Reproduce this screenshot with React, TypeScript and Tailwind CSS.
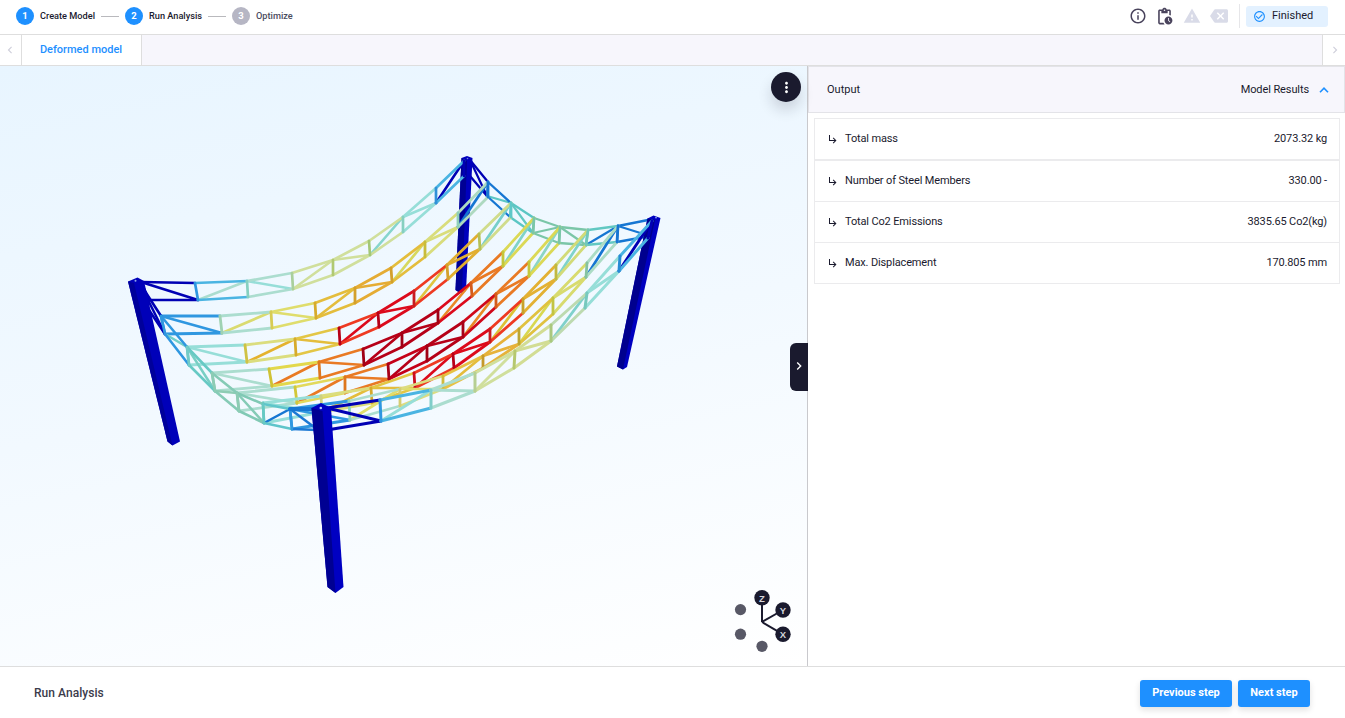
import type { ReactNode } from "react";
import {
  MdInfoOutline,
  MdOutlinePendingActions,
  MdWarning,
  MdBackspace,
  MdCheckCircleOutline,
  MdChevronLeft,
  MdChevronRight,
  MdMoreVert,
  MdSubdirectoryArrowRight,
} from "react-icons/md";

type Pt = [number, number];

interface Truss {
  top: Pt[];
  bottom: Pt[];
  chords: string[];
  diagonals: string[];
  posts: string[];
}

const NAVY = "#0000b4";
const BLUE = "#1676d2";
const SKY = "#2f97e0";
const CYAN = "#4ab4e2";
const AQUA = "#96ded8";
const MINT = "#abddcf";
const PALE = "#d0df9c";
const YELLOW = "#dfdd6c";
const GOLD = "#e4bd3c";
const ORANGE = "#e97a24";
const RED = "#ee3a22";
const CRIMSON = "#dc0a1c";
const DARK = "#b60018";

const trusses: Truss[] = [
  {
    top: [[141, 282], [195, 283], [247, 281], [292, 273], [333, 260], [369, 241], [403, 217], [436, 188], [464, 161]],
    bottom: [[149, 300], [198, 300], [248, 297], [293, 289], [333, 275], [370, 255], [403, 232], [436, 203], [464, 176]],
    chords: [NAVY, CYAN, MINT, PALE, PALE, PALE, AQUA, CYAN],
    diagonals: [NAVY, MINT, AQUA, PALE, PALE, "#86d5cd", AQUA, NAVY],
    posts: [NAVY, SKY, "#86d0c0", "#a9cf9c", "#b0c972", "#a3c777", "#86cfc0", "#3091d8", NAVY],
  },
  {
    top: [[161, 316], [220, 316], [271, 312], [315, 303], [355, 288], [391, 268], [425, 242], [458, 213], [488, 182]],
    bottom: [[165, 334], [222, 333], [272, 328], [316, 318], [355, 303], [392, 282], [425, 257], [458, 227], [488, 197]],
    chords: [SKY, MINT, YELLOW, GOLD, "#e5ac34", GOLD, "#d9dd7c", "#add9c0"],
    diagonals: [SKY, "#dadb70", YELLOW, GOLD, "#e5ac34", "#d7d85e", "#d9dd7c", BLUE],
    posts: [SKY, "#9fd2b2", "#d7cc54", "#d6ab2c", "#d3a02c", "#d3a02c", "#c9bc3c", "#8fcfb8", BLUE],
  },
  {
    top: [[187, 347], [245, 345], [295, 339], [339, 328], [378, 313], [414, 291], [447, 265], [479, 234], [511, 203]],
    bottom: [[189, 365], [247, 362], [296, 355], [340, 344], [379, 327], [414, 306], [448, 279], [480, 249], [511, 217]],
    chords: [AQUA, "#dbdd7e", "#e3c645", RED, CRIMSON, RED, "#e1ae30", "#d0dc8c"],
    diagonals: [AQUA, "#e4b22e", GOLD, CRIMSON, CRIMSON, "#dfc540", "#e1ae30", "#76cfca"],
    posts: ["#72cbc7", "#cfc245", "#d6ab2c", DARK, DARK, "#c81b20", "#d3a02c", "#b5bf55", "#5fc8c8"],
  },
  {
    top: [[212, 373], [269, 369], [319, 362], [363, 349], [402, 333], [438, 310], [471, 283], [503, 252], [534, 218]],
    bottom: [[215, 391], [272, 386], [320, 378], [364, 365], [402, 347], [438, 323], [472, 296], [503, 266], [533, 233]],
    chords: [MINT, "#e2d84c", ORANGE, DARK, DARK, CRIMSON, ORANGE, "#dbd956"],
    diagonals: [MINT, ORANGE, ORANGE, DARK, DARK, "#e98926", ORANGE, "#80d3c7"],
    posts: ["#8dccb4", "#cfc235", "#dd771e", "#a00016", "#a00016", "#a00016", "#d45b1c", "#c3c73a", "#7bc6a8"],
  },
  {
    top: [[237, 393], [295, 387], [345, 377], [388, 364], [427, 346], [463, 322], [496, 294], [529, 262], [560, 227]],
    bottom: [[239, 411], [297, 403], [345, 393], [389, 379], [427, 361], [463, 337], [496, 307], [529, 276], [559, 243]],
    chords: [MINT, "#e2d95c", ORANGE, "#c50018", DARK, "#d0081a", ORANGE, "#dbd956"],
    diagonals: [MINT, ORANGE, ORANGE, DARK, DARK, "#e98926", ORANGE, "#8bd5c4"],
    posts: ["#8dccb4", "#d1c739", "#dd771e", "#a60018", "#a00016", "#a60018", "#d45b1c", "#c3c73a", "#7bc6a8"],
  },
  {
    top: [[263, 403], [321, 396], [371, 388], [414, 373], [453, 354], [490, 329], [523, 299], [556, 265], [588, 230]],
    bottom: [[264, 423], [322, 412], [372, 403], [415, 388], [454, 368], [490, 342], [523, 313], [556, 279], [586, 245]],
    chords: [AQUA, "#dbdd7e", "#e3c645", RED, CRIMSON, RED, "#e3b133", "#d2db78"],
    diagonals: [AQUA, GOLD, GOLD, CRIMSON, CRIMSON, "#dcc235", "#e3b133", "#7fd3ca"],
    posts: ["#67c9c4", "#cdd083", "#d6ab2c", "#cc0c1c", DARK, "#c81b20", "#c8a22c", "#c0b941", "#72c8b9"],
  },
  {
    top: [[290, 409], [349, 401], [400, 389], [443, 376], [483, 356], [519, 329], [553, 298], [587, 263], [618, 226]],
    bottom: [[292, 429], [350, 420], [400, 406], [443, 389], [483, 368], [519, 344], [553, 314], [586, 277], [617, 242]],
    chords: [SKY, MINT, "#dcdc80", "#e7c144", "#e6b23a", "#e0c240", "#d8db6e", "#acdcc5"],
    diagonals: [SKY, YELLOW, YELLOW, GOLD, "#e6b23a", "#d8d850", "#d8db6e", BLUE],
    posts: [SKY, "#8bd1bf", "#d5cc70", "#d1ba3b", "#c4992b", "#bda631", "#c2c443", "#86c3a0", BLUE],
  },
  {
    top: [[327, 408], [380, 400], [431, 390], [475, 373], [515, 351], [551, 325], [587, 293], [620, 256], [652, 221]],
    bottom: [[327, 430], [381, 421], [431, 408], [475, 391], [514, 368], [551, 341], [585, 308], [619, 271], [648, 238]],
    chords: [NAVY, CYAN, MINT, PALE, "#d2dd94", "#bddab0", AQUA, CYAN],
    diagonals: [NAVY, AQUA, MINT, PALE, "#d2dd94", "#80d1cb", AQUA, NAVY],
    posts: [NAVY, SKY, "#80ceca", "#b6cf93", "#b5c86f", "#aac87e", "#77c9be", "#278bd5", NAVY],
  },
];

const leftEdge: Truss = {
  top: [[139, 282], [161, 316], [187, 347], [212, 373], [237, 393], [263, 404], [290, 409], [320, 409]],
  bottom: [[141, 298], [165, 334], [189, 365], [215, 391], [239, 411], [264, 423], [292, 429], [318, 430]],
  chords: [NAVY, SKY, "#67c9c4", "#85cbb6", "#80c9b4", "#5fc5ca", "#1b78d4"],
  diagonals: [NAVY, "#70cfc8", "#78cfc4", "#8dccb4", "#85cbb6", BLUE, "#1b78d4"],
  posts: [NAVY, SKY, "#72cbc7", "#8dccb4", "#8dccb4", "#67c9c4", SKY, NAVY],
};

const backEdge: Truss = {
  top: [[470, 160], [488, 182], [511, 203], [534, 218], [560, 227], [588, 230], [618, 226], [653, 219]],
  bottom: [[470, 176], [487, 196], [510, 217], [533, 233], [559, 243], [586, 245], [617, 242], [650, 236]],
  chords: [NAVY, BLUE, "#5bc6c4", "#7bc6a8", "#7bc6a8", "#62c8c2", BLUE],
  diagonals: [NAVY, "#5bc6c4", "#62c8c2", "#7bc6a8", "#7bc6a8", BLUE, BLUE],
  posts: [NAVY, BLUE, "#5bc6c4", "#7bc6a8", "#7bc6a8", "#62c8c2", BLUE, NAVY],
};

function Member({ a, b, color, width }: { a: Pt; b: Pt; color: string; width: number }) {
  return <line x1={a[0]} y1={a[1]} x2={b[0]} y2={b[1]} stroke={color} strokeWidth={width} strokeLinecap="round" />;
}

function TrussLines({ truss, width }: { truss: Truss; width: number }) {
  const { top, bottom, chords, diagonals, posts } = truss;
  return (
    <g>
      {chords.map((color, i) => (
        <g key={i}>
          <Member
            a={i % 2 ? bottom[i] : top[i]}
            b={i % 2 ? top[i + 1] : bottom[i + 1]}
            color={diagonals[i]}
            width={width - 0.1}
          />
          <Member a={bottom[i]} b={bottom[i + 1]} color={color} width={width} />
          <Member a={top[i]} b={top[i + 1]} color={color} width={width} />
        </g>
      ))}
      {posts.map((color, i) => (
        <Member key={i} a={top[i]} b={bottom[i]} color={color} width={width} />
      ))}
    </g>
  );
}

function DeformedModel() {
  return (
    <svg viewBox="0 66 807 600" className="block h-full w-full">
      <TrussLines truss={backEdge} width={2.3} />
      <polygon points="461.5,158 467,156 472.5,158 466,291 460,293 455.5,290" fill="#0000bd" />
      <polygon points="461.5,158 467,161 462,292 460,293 455.5,290" fill="#000094" />
      <TrussLines truss={trusses[0]} width={2.7} />
      {trusses.slice(1, 7).map((truss, i) => (
        <TrussLines key={i} truss={truss} width={2.8} />
      ))}
      <TrussLines truss={leftEdge} width={2.6} />
      <Member a={[290, 409]} b={[320, 409]} color={BLUE} width={4} />
      <polygon points="128,281.5 137.5,277.5 144,281 180,441.5 172.5,445.5 167.5,441.5" fill="#0000b9" />
      <polygon points="128,281.5 134,283 172.5,445.5 167.5,441.5" fill="#00009b" />
      <circle cx="135.5" cy="280.8" r="1" fill="#8fa5e8" />
      <polygon points="647.5,218.5 653.5,215.5 660.5,218 627,367 623,369.5 617,366.5" fill="#0000c0" />
      <polygon points="647.5,218.5 655,220 623,369.5 617,366.5" fill="#00008e" />
      <TrussLines truss={trusses[7]} width={3} />
      <polygon points="311.5,408 321,403 331,408 343.5,587 335.5,593 327.5,587" fill="#0000c2" />
      <polygon points="311.5,408 322.5,411 335.5,593 327.5,587" fill="#000092" />
      <circle cx="320.8" cy="408" r="1.3" fill="#b5c8f5" />
      <circle cx="656" cy="217.6" r="0.9" fill="#8fa5e8" />
      <circle cx="467.5" cy="158.5" r="0.8" fill="#6f86d8" />
    </svg>
  );
}

function AxisGizmo() {
  const ends: { x: number; y: number; label: string }[] = [
    { x: 32, y: 11.7, label: "Z" },
    { x: 53, y: 24, label: "Y" },
    { x: 53, y: 48.3, label: "X" },
  ];
  return (
    <svg viewBox="0 0 66 72" className="h-[72px] w-[66px]">
      {[[10.5, 23.6], [10.5, 48.2], [32, 60.3]].map(([x, y]) => (
        <circle key={`${x}-${y}`} cx={x} cy={y} r="5.6" fill="#585866" />
      ))}
      {ends.map(({ x, y, label }) => (
        <g key={label}>
          <line x1="32" y1="36" x2={x} y2={y} stroke="#1a1a2e" strokeWidth="2" />
          <circle cx={x} cy={y} r="7.7" fill="#1a1a2e" />
          <text
            x={x}
            y={y + 4}
            textAnchor="middle"
            fill="#d4d4da"
            className="font-['Liberation_Sans',sans-serif] text-[9.5px] font-bold"
          >
            {label}
          </text>
        </g>
      ))}
    </svg>
  );
}

function Step({ index, label, done }: { index: number; label: string; done: boolean }) {
  return (
    <div className="flex items-center gap-1.5">
      <span
        className={`flex size-[18px] items-center justify-center rounded-full pt-px text-[9.5px] font-bold text-white ${
          done ? "bg-[#1e90ff]" : "bg-[#b6b6c4]"
        }`}
      >
        {index}
      </span>
      <span className={`text-[9.2px] font-medium ${done ? "text-[#1a1a2e]" : "text-[#4b4b5e]"}`}>{label}</span>
    </div>
  );
}

function Connector() {
  return <span className="h-px w-[18px] bg-[#b9b9bd]" />;
}

function ResultRow({ label, value, first = false }: { label: string; value: string; first?: boolean }) {
  return (
    <div
      className={`flex items-center border-b border-[#ebebed] pr-3 pl-3 text-[11px] tracking-[-0.14px] ${
        first ? "h-[43px] border-t border-b-2" : "h-[41px]"
      }`}
    >
      <MdSubdirectoryArrowRight className="mr-1.5 size-3" />
      <span className="flex-1">{label}</span>
      <span>{value}</span>
    </div>
  );
}

function StepButton({ children, className }: { children: ReactNode; className: string }) {
  return (
    <button
      className={`h-[27px] rounded-[3px] bg-[#1e90ff] pb-px text-[11px] font-bold text-white shadow-[0_3px_6px_rgba(0,0,0,0.12)] ${className}`}
    >
      {children}
    </button>
  );
}

export default function App() {
  return (
    <div className="flex h-[718px] w-[1345px] flex-col overflow-hidden bg-white font-['Roboto',sans-serif] text-[11px] text-[#1a1a2e]">
      <header className="flex h-[35px] shrink-0 items-center justify-between border-b border-[#dedede] pr-[17px] pb-0.5 pl-4">
        <div className="flex items-center gap-1.5">
          <Step index={1} label="Create Model" done />
          <Connector />
          <Step index={2} label="Run Analysis" done />
          <Connector />
          <Step index={3} label="Optimize" done={false} />
        </div>
        <div className="flex items-center">
          <MdInfoOutline className="mr-2 size-[18px] text-[#49435c]" />
          <MdOutlinePendingActions className="mr-[9px] size-[19px] text-[#49435c]" />
          <MdWarning className="mr-[9px] size-[18px] text-[#d9dbe8]" />
          <MdBackspace className="mr-[11px] size-[18px] text-[#d9dbe8]" />
          <span className="mr-1.5 h-6 w-px bg-[#e6e6e9]" />
          <div className="flex h-[21px] w-[82px] items-center rounded-[3px] bg-[#e3f1ff] pl-[7px]">
            <MdCheckCircleOutline className="mr-1.5 size-[13px] text-[#1e90ff]" />
            <span className="text-[11px]">Finished</span>
          </div>
        </div>
      </header>

      <nav className="flex h-[31px] shrink-0 border-b border-[#dedede] bg-[#f7f6fc]">
        <div className="flex w-[22px] items-center justify-center border-r border-[#dedede] bg-white">
          <MdChevronLeft className="-ml-0.5 size-3.5 text-[#cfcfdb]" />
        </div>
        <div className="flex w-[120px] items-center justify-center border-r border-[#dedede] bg-white pr-px text-[11px] font-medium text-[#1e90ff]">
          Deformed model
        </div>
        <div className="flex-1" />
        <div className="flex w-[23px] items-center justify-center border-l border-[#dedede] bg-white pl-px">
          <MdChevronRight className="size-3.5 text-[#cfcfdb]" />
        </div>
      </nav>

      <main className="flex h-[600px] shrink-0">
        <section className="relative w-[808px] shrink-0 border-r border-[#c9c9cd] bg-[linear-gradient(168deg,#e8f5ff_0%,#f2f9ff_50%,#ffffff_100%)]">
          <DeformedModel />
          <button className="absolute top-1.5 right-1.5 flex size-[30px] items-center justify-center rounded-full bg-[#1a1a2e] text-white shadow-[0_8px_14px_rgba(26,26,46,0.16)]">
            <MdMoreVert className="size-[17px]" />
          </button>
          <button className="absolute top-[277px] -right-px flex h-12 w-[18px] items-center justify-center rounded-l-md bg-[#1a1a2e] pb-0.5 text-white">
            <MdChevronRight className="size-4" />
          </button>
          <div className="absolute right-[11px] bottom-2">
            <AxisGizmo />
          </div>
        </section>

        <section className="flex-1">
          <div className="flex h-[47px] items-center justify-between border border-[#e3e3e8] bg-[#f7f6fc] pt-px pr-[15px] pl-[18px]">
            <span>Output</span>
            <div className="flex items-center gap-2.5">
              <span className="tracking-[-0.1px]">Model Results</span>
              <svg viewBox="0 0 10 8" className="h-2 w-2.5" fill="none" stroke="#1e90ff" strokeWidth="1.6">
                <path d="M1 6.3 5 2.2 9 6.3" />
              </svg>
            </div>
          </div>
          <div className="mt-[5px] mr-[5px] ml-1.5 flex h-[166px] flex-col border-x border-[#ebebed]">
            <ResultRow label="Total mass" value="2073.32 kg" first />
            <ResultRow label="Number of Steel Members" value="330.00 -" />
            <ResultRow label="Total Co2 Emissions" value="3835.65 Co2(kg)" />
            <ResultRow label="Max. Displacement" value="170.805 mm" />
          </div>
        </section>
      </main>

      <footer className="flex flex-1 items-center border-t border-[#dedede] pr-[35px] pl-[34px]">
        <span className="flex-1 text-[12px] font-medium tracking-[0.05px] text-[#3b3b4b]">Run Analysis</span>
        <div className="flex gap-1.5 pt-0.5">
          <StepButton className="w-[92px]">Previous step</StepButton>
          <StepButton className="w-[72px]">Next step</StepButton>
        </div>
      </footer>
    </div>
  );
}
